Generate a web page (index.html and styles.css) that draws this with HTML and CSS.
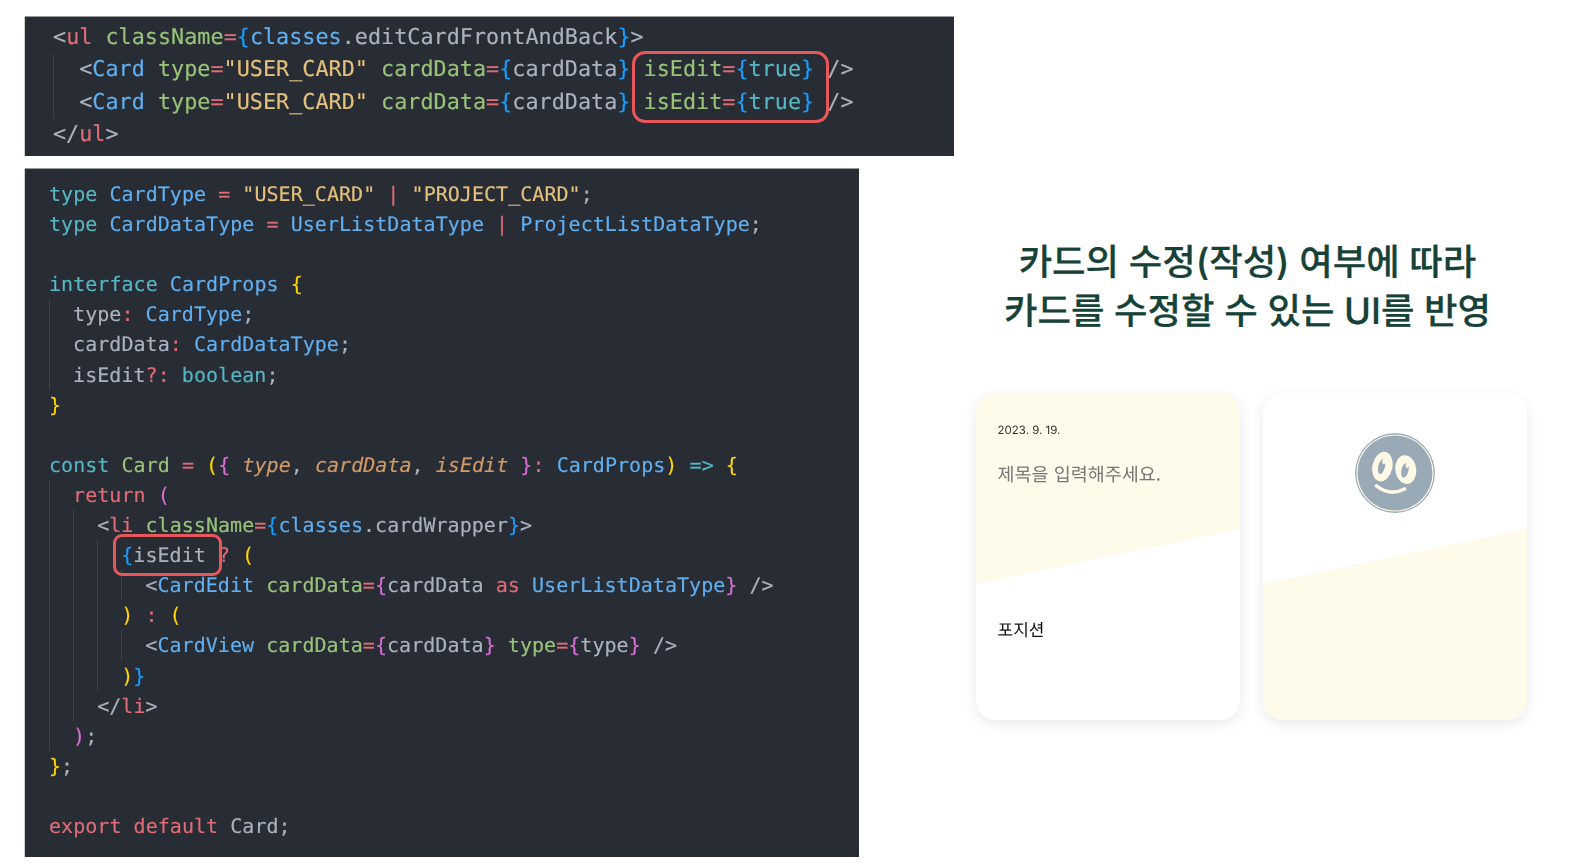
FILE: index.html
```html
<!DOCTYPE html>
<html lang="ko">
<head>
<meta charset="utf-8">
<title>Card</title>
<link rel="stylesheet" href="styles.css">
</head>
<body>
<main class="slide">
  <section class="code-col">
    <pre class="code code-a"><div class="ln"><b class="g">&lt;</b><b class="r">ul</b> <b class="n">className</b><b class="r">=</b><b class="bb">{</b><b class="u">classes</b><b class="g">.editCardFrontAndBack</b><b class="bb">}</b><b class="g">&gt;</b></div>
<div class="ln"><i class="ind"></i><b class="g">&lt;</b><b class="u">Card</b> <b class="n">type</b><b class="r">=</b><b class="s">"USER_CARD"</b> <b class="n">cardData</b><b class="r">=</b><b class="bb">{</b><b class="g">cardData</b><b class="bb">}</b> <b class="n">isEdit</b><b class="r">=</b><b class="bb">{</b><b class="c">true</b><b class="bb">}</b> <b class="g">/&gt;</b></div>
<div class="ln"><i class="ind"></i><b class="g">&lt;</b><b class="u">Card</b> <b class="n">type</b><b class="r">=</b><b class="s">"USER_CARD"</b> <b class="n">cardData</b><b class="r">=</b><b class="bb">{</b><b class="g">cardData</b><b class="bb">}</b> <b class="n">isEdit</b><b class="r">=</b><b class="bb">{</b><b class="c">true</b><b class="bb">}</b> <b class="g">/&gt;</b></div>
<div class="ln"><b class="g">&lt;/</b><b class="r">ul</b><b class="g">&gt;</b></div><span class="mark mark-a"></span></pre>
    <pre class="code code-b"><div class="ln"><b class="c">type</b> <b class="u">CardType</b> <b class="r">=</b> <b class="s">"USER_CARD"</b> <b class="r">|</b> <b class="s">"PROJECT_CARD"</b><b class="g">;</b></div>
<div class="ln"><b class="c">type</b> <b class="u">CardDataType</b> <b class="r">=</b> <b class="u">UserListDataType</b> <b class="r">|</b> <b class="u">ProjectListDataType</b><b class="g">;</b></div>
<div class="ln"> </div>
<div class="ln"><b class="c">interface</b> <b class="u">CardProps</b> <b class="y">{</b></div>
<div class="ln"><i class="ind"></i><b class="g">type</b><b class="r">:</b> <b class="u">CardType</b><b class="g">;</b></div>
<div class="ln"><i class="ind"></i><b class="g">cardData</b><b class="r">:</b> <b class="u">CardDataType</b><b class="g">;</b></div>
<div class="ln"><i class="ind"></i><b class="g">isEdit</b><b class="r">?:</b> <b class="c">boolean</b><b class="g">;</b></div>
<div class="ln"><b class="y">}</b></div>
<div class="ln"> </div>
<div class="ln"><b class="c">const</b> <b class="n">Card</b> <b class="r">=</b> <b class="y">(</b><b class="m">{</b> <em class="p">type</em><b class="g">,</b> <em class="p">cardData</em><b class="g">,</b> <em class="p">isEdit</em> <b class="m">}</b><b class="r">:</b> <b class="u">CardProps</b><b class="y">)</b> <b class="c">=&gt;</b> <b class="y">{</b></div>
<div class="ln"><i class="ind"></i><b class="r">return</b> <b class="m">(</b></div>
<div class="ln"><i class="ind"></i><i class="ind"></i><b class="g">&lt;</b><b class="r">li</b> <b class="n">className</b><b class="r">=</b><b class="bb">{</b><b class="u">classes</b><b class="g">.cardWrapper</b><b class="bb">}</b><b class="g">&gt;</b></div>
<div class="ln"><i class="ind"></i><i class="ind"></i><i class="ind"></i><b class="bb">{</b><b class="g">isEdit</b> <b class="r">?</b> <b class="y">(</b></div>
<div class="ln"><i class="ind"></i><i class="ind"></i><i class="ind"></i><i class="ind"></i><b class="g">&lt;</b><b class="u">CardEdit</b> <b class="n">cardData</b><b class="r">=</b><b class="m">{</b><b class="g">cardData</b> <b class="r">as</b> <b class="u">UserListDataType</b><b class="m">}</b> <b class="g">/&gt;</b></div>
<div class="ln"><i class="ind"></i><i class="ind"></i><i class="ind"></i><b class="y">)</b> <b class="r">:</b> <b class="y">(</b></div>
<div class="ln"><i class="ind"></i><i class="ind"></i><i class="ind"></i><i class="ind"></i><b class="g">&lt;</b><b class="u">CardView</b> <b class="n">cardData</b><b class="r">=</b><b class="m">{</b><b class="g">cardData</b><b class="m">}</b> <b class="n">type</b><b class="r">=</b><b class="m">{</b><b class="g">type</b><b class="m">}</b> <b class="g">/&gt;</b></div>
<div class="ln"><i class="ind"></i><i class="ind"></i><i class="ind"></i><b class="y">)</b><b class="bb">}</b></div>
<div class="ln"><i class="ind"></i><i class="ind"></i><b class="g">&lt;/</b><b class="r">li</b><b class="g">&gt;</b></div>
<div class="ln"><i class="ind"></i><b class="m">)</b><b class="g">;</b></div>
<div class="ln"><b class="y">}</b><b class="g">;</b></div>
<div class="ln"> </div>
<div class="ln"><b class="r">export default</b> <b class="g">Card;</b></div><span class="mark mark-b"></span></pre>
  </section>
  <section class="ui-col">
    <h1 class="headline">카드의 수정(작성) 여부에 따라<br>카드를 수정할 수 있는 UI를 반영</h1>
    <div class="cards">
      <article class="card card-front">
        <p class="date">2023. 9. 19.</p>
        <p class="title">제목을 입력해주세요.</p>
        <p class="position">포지션</p>
      </article>
      <article class="card card-back">
        <svg class="avatar" viewBox="0 0 80 80" width="80" height="80" aria-hidden="true">
          <circle cx="40" cy="40" r="39.4" fill="#9aa9b6" stroke="#9aa9b6" stroke-width="1"/>
          <circle cx="40" cy="40" r="38" fill="#9aa9b6" stroke="#fdf9e6" stroke-width="1.2"/>
          <ellipse cx="27.4" cy="33.6" rx="10" ry="15" fill="#fdf9e6" transform="rotate(12 27.4 33.6)"/>
          <ellipse cx="50.8" cy="36.6" rx="10.4" ry="14.4" fill="#fdf9e6" transform="rotate(-8 50.8 36.6)"/>
          <ellipse cx="26.6" cy="33.6" rx="3.3" ry="7.6" fill="#9aa9b6" transform="rotate(14 26.6 33.6)"/>
          <ellipse cx="50" cy="37.2" rx="3.5" ry="7.4" fill="#9aa9b6" transform="rotate(14 50 37.2)"/>
          <ellipse cx="29" cy="28.6" rx="1.7" ry="2.8" fill="#fdf9e6" transform="rotate(14 29 28.6)"/>
          <ellipse cx="52.4" cy="32.2" rx="1.7" ry="2.8" fill="#fdf9e6" transform="rotate(14 52.4 32.2)"/>
          <path d="M21.4 52.8Q35 63.5 49.6 56" fill="none" stroke="#fdf9e6" stroke-width="3.6" stroke-linecap="round"/>
        </svg>
      </article>
    </div>
  </section>
</main>
</body>
</html>
```
FILE: styles.css
```css
* { box-sizing: border-box; }
html, body { margin: 0; background: #fff; }
body { width: 1570px; height: 863px; overflow: hidden; }
.slide { display: flex; align-items: flex-start; padding: 16.5px 0 0 25px; text-rendering: geometricPrecision; }
.code-col { width: 928.5px; display: flex; flex-direction: column; gap: 13px; flex: none; }
.code {
  position: relative;
  margin: 0;
  background: #282c35;
  box-shadow: 0 -1px 0 #9a9a9a, -1px 0 0 #cfcfcf;
  font-family: "DejaVu Sans Mono", monospace;
  white-space: normal;
  -webkit-text-stroke: 0.15px;
  filter: blur(0.45px);
}
.code b, .code em { font-weight: 400; }
.code i { font-style: normal; }
.ln { white-space: pre; }
.ind { display: inline-block; vertical-align: top; box-shadow: inset 1px 0 0 #3e424c; }
.code-a { width: 928.5px; height: 139px; padding: 5px 0 0 28px; font-size: 21.75px; line-height: 32.5px; letter-spacing: 0.03px; }
.code-a .ind { width: 26.2px; height: 32.5px; }
.code-b { width: 833.5px; height: 688px; padding: 10.5px 0 0 24px; font-size: 20px; line-height: 30.1px; letter-spacing: 0.04px; }
.code-b .ind { width: 24.08px; height: 30.1px; }
.g { color: #abb2bf; }
.r { color: #e06c75; }
.n { color: #98c379; }
.u { color: #61afef; }
.s { color: #e5c07b; }
.c { color: #56b6c2; }
.y { color: #ffd700; }
.m { color: #da70d6; }
.bb { color: #179fff; }
.p { color: #d19a66; font-style: italic; }
.mark { position: absolute; border: 3px solid #e8575a; }
.mark-a { left: 607px; top: 34px; width: 197px; height: 72px; border-radius: 13px; }
.mark-b { left: 88px; top: 365.5px; width: 109px; height: 42px; border-radius: 9px; }
.ui-col { width: 552px; margin-left: 22px; flex: none; font-family: "Noto Sans CJK KR", sans-serif; }
.headline {
  margin: 0;
  padding: 221px 8px 0 0;
  text-align: center;
  color: #174238;
  font-family: Inter, "Noto Sans CJK KR", sans-serif;
  font-size: 36.4px;
  font-weight: 500;
  line-height: 49px;
  -webkit-text-stroke: 0.2px #174238;
}
.cards { display: flex; gap: 22.5px; margin-top: 57px; }
.card { width: 264.5px; height: 327px; border-radius: 20px; box-shadow: 0 4px 14px rgba(0,0,0,.09); filter: blur(.3px); }
.card-front { background: linear-gradient(168.2deg, #fefbea 50%, #fff 50%); padding: 30px 22px 0; }
.card-back { background: linear-gradient(168.2deg, #fff 50%, #fefbea 50%); display: flex; justify-content: center; padding-top: 40px; }
.card p { margin: 0; }
.date { font-family: Inter, "Noto Sans CJK KR", sans-serif; font-size: 11.5px; line-height: 14px; color: #333; }
.title { margin-top: 22px !important; font-size: 18.5px; line-height: 30px; color: #777; }
.position { margin-top: 128px !important; font-size: 17px; line-height: 24px; color: #111; }
.avatar { display: block; }
```
